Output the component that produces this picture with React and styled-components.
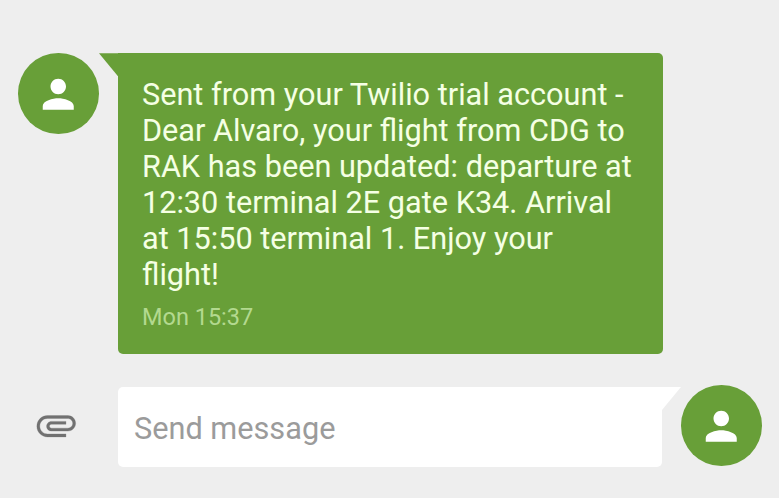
import React from "react";
import styled, { createGlobalStyle } from "styled-components";

const GlobalStyle = createGlobalStyle`
  * { box-sizing: border-box; }
  body { margin: 0; background: #eeeeee; font-family: Roboto, "Liberation Sans", sans-serif; }
`;

const Screen = styled.main`
  display: flex;
  flex-direction: column;
  gap: 31px;
  width: 779px;
  height: 498px;
  padding: 53.3px 17px 0 18.3px;
  overflow: hidden;
  background: #eeeeee;
`;

const MessageRow = styled.section`
  display: flex;
  align-items: flex-start;
`;

const AvatarCircle = styled.div`
  flex: none;
  display: flex;
  align-items: center;
  justify-content: center;
  width: 80.7px;
  height: 80.7px;
  padding-top: 1px;
  border-radius: 50%;
  background: #689f38;
  color: #ffffff;
`;

const Tail = styled.span`
  flex: none;
  width: 20px;
  height: 23px;
  margin: ${(p) => (p.$side === "left" ? "0 -1px 0 0" : "2px 0 0 -1px")};
  background: ${(p) => (p.$side === "left" ? "#689f38" : "#ffffff")};
  clip-path: ${(p) =>
    p.$side === "left"
      ? "polygon(0 0, 100% 0, 100% 100%, 95% 100%)"
      : "polygon(0 0, 100% 0, 5% 100%, 0 100%)"};
`;

const Bubble = styled.article`
  width: 545px;
  height: 300.7px;
  padding: 24px 0 0 24px;
  border-radius: 0 5px 5px 5px;
  background: #689f38;
`;

const MessageText = styled.p`
  margin: 0;
  color: #f5ffe4;
  font-size: 30.66px;
  line-height: 35.85px;
  white-space: pre;
`;

const Timestamp = styled.time`
  display: block;
  margin-top: 11px;
  color: #b3d98f;
  font-size: 23.5px;
  line-height: 28px;
`;

const Composer = styled.section`
  display: flex;
  align-items: flex-start;
`;

const AttachButton = styled.button`
  display: flex;
  align-items: center;
  justify-content: center;
  width: 77px;
  height: 81px;
  margin-right: 22.7px;
  padding: 0 1px 0 0;
  border: 0;
  background: none;
  color: #717171;
`;

const MessageField = styled.div`
  display: flex;
  align-items: center;
  width: 544px;
  height: 80px;
  margin-top: 2px;
  padding: 4px 0 0 16px;
  border-radius: 5px 0 5px 5px;
  background: #ffffff;
  color: #9b9b9b;
  font-size: 30.7px;
  line-height: 36px;
`;

const Icon = styled.svg`
  display: block;
  width: 46.5px;
  height: 46.5px;
  fill: currentColor;
`;

const ClipIcon = styled(Icon)`
  stroke: currentColor;
  stroke-width: 0.15;
`;

function Avatar() {
  return (
    <AvatarCircle>
      <Icon viewBox="0 0 24 24">
        <path d="M12 12c2.21 0 4-1.79 4-4s-1.79-4-4-4-4 1.79-4 4 1.79 4 4 4zm0 2c-2.67 0-8 1.34-8 4v2h16v-2c0-2.66-5.33-4-8-4z" />
      </Icon>
    </AvatarCircle>
  );
}

const lines = [
  "Sent from your Twilio trial account -",
  "Dear Alvaro, your flight from CDG to",
  "RAK has been updated: departure at",
  "12:30 terminal 2E gate K34. Arrival",
  "at 15:50 terminal 1. Enjoy your",
  "flight!",
];

export default function App() {
  return (
    <>
      <GlobalStyle />
      <Screen>
        <MessageRow>
          <Avatar />
          <Tail $side="left" />
          <Bubble>
            <MessageText>{lines.join("\n")}</MessageText>
            <Timestamp>Mon 15:37</Timestamp>
          </Bubble>
        </MessageRow>
        <Composer>
          <AttachButton aria-label="Attach">
            <ClipIcon viewBox="0 0 24 24">
              <path d="M7.5 18C4.46 18 2 15.54 2 12.5S4.46 7 7.5 7H18c2.21 0 4 1.79 4 4s-1.79 4-4 4H9.5C8.12 15 7 13.88 7 12.5S8.12 10 9.5 10H17v1.5H9.5c-.55 0-1 .45-1 1s.45 1 1 1H18c1.38 0 2.5-1.12 2.5-2.5S19.38 8.5 18 8.5H7.5c-2.21 0-4 1.79-4 4s1.79 4 4 4H17V18H7.5z" />
            </ClipIcon>
          </AttachButton>
          <MessageField>Send message</MessageField>
          <Tail $side="right" />
          <Avatar />
        </Composer>
      </Screen>
    </>
  );
}
